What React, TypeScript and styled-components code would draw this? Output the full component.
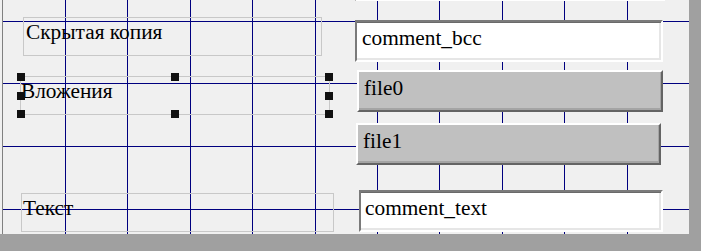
import * as React from 'react';
import styled, { createGlobalStyle } from 'styled-components';

const GlobalStyle = createGlobalStyle`
  html, body {
    margin: 0;
    padding: 0;
    background: #a0a0a0;
  }
`;

const Workspace = styled.div`
  width: 701px;
  height: 251px;
  background: #a0a0a0;
  overflow: hidden;
`;

const Frame = styled.div`
  width: 689px;
  height: 234px;
  padding-left: 2px;
  box-sizing: border-box;
  background: #f0f0f0;
  display: flex;
`;

// design surface: controls sit at their form coordinates
const Canvas = styled.div`
  position: relative;
  flex: 1;
  border-left: 1px solid #808080;
  overflow: hidden;
`;

const GridLayer = styled.svg`
  position: absolute;
  left: 0;
  top: 0;
  pointer-events: none;
`;

const Control = styled.div<{ $x: number; $y: number; $w: number; $h: number }>`
  position: absolute;
  left: ${(p) => p.$x}px;
  top: ${(p) => p.$y}px;
  width: ${(p) => p.$w}px;
  height: ${(p) => p.$h}px;
  box-sizing: border-box;
  font-family: "Liberation Serif", "Times New Roman", "DejaVu Serif", serif;
  font-size: 16pt;
  line-height: 24px;
  color: #000;
  white-space: nowrap;
`;

const Label = styled(Control)<{ $pad: number }>`
  border: 1px solid #c8c8c8;
  padding: 2px 0 0 ${(p) => p.$pad}px;
`;

const TextBox = styled(Control)<{ $pad: number }>`
  background: #fff;
  border: 2px solid;
  border-color: #7a7a7a #fff #fff #7a7a7a;
  box-shadow: inset 0 1px #6a6a6a, inset -2px -2px #e6e6e6;
  padding: 4px 0 0 ${(p) => p.$pad}px;
`;

const Button = styled(Control)`
  background: #c0c0c0;
  border: 2px solid;
  border-color: #fff #646464 #646464 #fff;
  box-shadow: inset -1px -2px #a4a4a4;
  padding: 4px 0 0 5px;
`;

const Handle = styled.span<{ $hx: string; $hy: string }>`
  position: absolute;
  width: 8px;
  height: 8px;
  background: #111;
  left: calc(${(p) => p.$hx} - 4px);
  top: calc(${(p) => p.$hy} - 4px);
`;

// canvas-local coords = page x - 3
const gridX = [65, 127, 190, 252, 315, 377, 439, 502, 564, 627];
const gridY = [21, 83, 146, 209];

const handles: [string, string][] = [
  ['0%', '0%'], ['50%', '0%'], ['100%', '0%'],
  ['0%', '50%'], ['100%', '50%'],
  ['0%', '100%'], ['50%', '100%'], ['100%', '100%'],
];

const Grid = () => (
  <GridLayer width={686} height={234} shapeRendering="crispEdges">
    {gridX.map((x) => (
      <line key={'v' + x} x1={x - 3 + 0.5} y1={0} x2={x - 3 + 0.5} y2={234} stroke="#00007f" strokeWidth={1} />
    ))}
    {gridY.map((y) => (
      <line key={'h' + y} x1={0} y1={y + 0.5} x2={686} y2={y + 0.5} stroke="#00007f" strokeWidth={1} />
    ))}
  </GridLayer>
);

export default function App() {
  return (
    <>
      <GlobalStyle />
      <Workspace>
        <Frame>
          <Canvas>
            <Grid />
            <TextBox $x={352} $y={-41} $w={310} $h={42} $pad={5} />
            <Label $x={20} $y={17} $w={299} $h={39} $pad={2}>Скрытая копия</Label>
            <TextBox $x={352} $y={20} $w={308} $h={42} $pad={5}>comment_bcc</TextBox>
            <Label $x={17} $y={76} $w={310} $h={39} $pad={0}>
              Вложения
              {handles.map(([hx, hy]) => (
                <Handle key={hx + hy} $hx={hx} $hy={hy} />
              ))}
            </Label>
            <Button $x={354} $y={70} $w={306} $h={42}>file0</Button>
            <Button $x={353} $y={123} $w={305} $h={42}>file1</Button>
            <Label $x={18} $y={193} $w={313} $h={39} $pad={1}>Текст</Label>
            <TextBox $x={356} $y={190} $w={304} $h={42} $pad={4}>comment_text</TextBox>
          </Canvas>
        </Frame>
      </Workspace>
    </>
  );
}
